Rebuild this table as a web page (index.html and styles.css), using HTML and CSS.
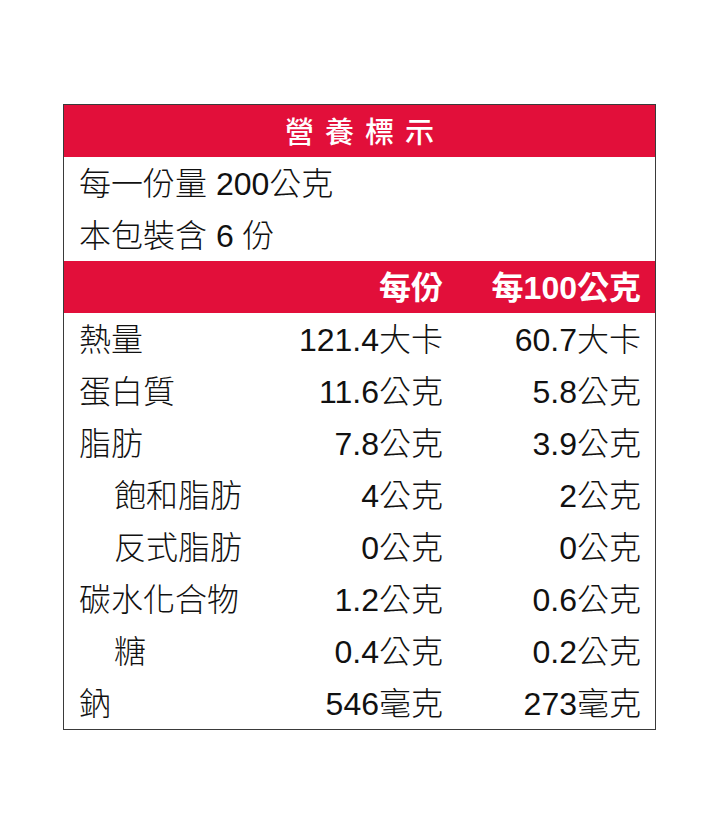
FILE: index.html
```html
<!DOCTYPE html>
<html lang="zh-Hant">
<head>
<meta charset="utf-8">
<title>營養標示</title>
<link rel="stylesheet" href="styles.css">
</head>
<body>
<div class="label">
  <div class="title">營養標示</div>
  <div class="line">每一份量 200公克</div>
  <div class="line">本包裝含 6 份</div>
  <div class="row head">
    <span></span><span class="num">每份</span><span class="num">每100公克</span>
  </div>
  <div class="row"><span>熱量</span><span class="num">121.4大卡</span><span class="num">60.7大卡</span></div>
  <div class="row"><span>蛋白質</span><span class="num">11.6公克</span><span class="num">5.8公克</span></div>
  <div class="row"><span>脂肪</span><span class="num">7.8公克</span><span class="num">3.9公克</span></div>
  <div class="row"><span class="sub">飽和脂肪</span><span class="num">4公克</span><span class="num">2公克</span></div>
  <div class="row"><span class="sub">反式脂肪</span><span class="num">0公克</span><span class="num">0公克</span></div>
  <div class="row"><span>碳水化合物</span><span class="num">1.2公克</span><span class="num">0.6公克</span></div>
  <div class="row"><span class="sub">糖</span><span class="num">0.4公克</span><span class="num">0.2公克</span></div>
  <div class="row"><span>鈉</span><span class="num">546毫克</span><span class="num">273毫克</span></div>
</div>
</body>
</html>
```
FILE: styles.css
```css
html, body {
  margin: 0;
  padding: 0;
  background: #ffffff;
}
*, *::before, *::after {
  box-sizing: border-box;
}
body {
  padding: 104px 0 0 63px;
  font-family: "Liberation Sans", "Noto Sans CJK TC", sans-serif;
  color: #111111;
}
.label {
  width: 593px;
  border: 1px solid #3a3a3a;
  display: flex;
  flex-direction: column;
}
.title {
  height: 52px;
  background: #e20f3a;
  color: #ffffff;
  font-size: 29px;
  font-weight: 500;
  letter-spacing: 11px;
  text-indent: 11px;
  display: flex;
  align-items: center;
  justify-content: center;
  padding-bottom: 3px;
}
.line {
  height: 52px;
  display: flex;
  align-items: center;
  padding: 0 0 4px 15px;
  font-size: 32px;
  font-weight: 300;
}
.row {
  height: 52px;
  display: grid;
  grid-template-columns: 1fr 170px 198px;
  align-items: center;
  padding: 0 14px 4px 15px;
  font-size: 32px;
  font-weight: 300;
}
.row.head {
  background: #e20f3a;
  color: #ffffff;
  font-weight: bold;
}
.num {
  text-align: right;
}
.sub {
  padding-left: 35px;
}
```
